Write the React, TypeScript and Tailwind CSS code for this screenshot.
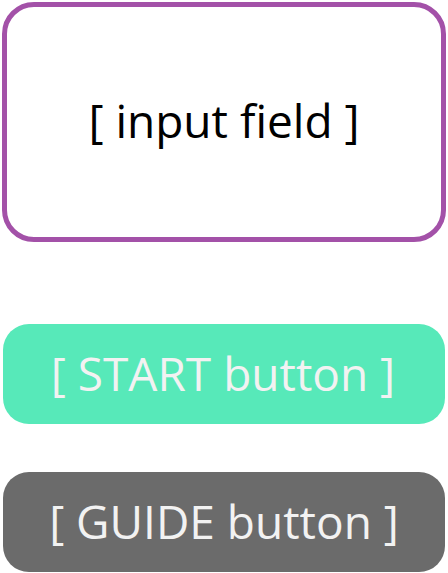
import * as React from 'react';

const font = { fontFamily: '"Open Sans", "Noto Sans", sans-serif' };

export default function App() {
  return (
    <div className="w-[448px] h-[573px] bg-white flex flex-col px-[2px] pt-[2px]" style={font}>
      <div className="h-[240px] border-[5px] border-[#a351a8] rounded-[32px] flex items-center justify-center">
        <span className="text-[46px] text-black leading-none -mt-[4px]">[ input field ]</span>
      </div>
      <button className="mt-[82px] mx-[1px] h-[100px] rounded-[26px] bg-[#57e9b9] flex items-center justify-center">
        <span className="text-[46px] text-[#f2f2f2] leading-none -mt-[3px] -ml-[2px]">[ START button ]</span>
      </button>
      <button className="mt-[48px] mx-[1px] h-[100px] rounded-[26px] bg-[#6b6b6b] flex items-center justify-center">
        <span className="text-[46px] text-[#f2f2f2] leading-none -mt-[3px]">[ GUIDE button ]</span>
      </button>
    </div>
  );
}
